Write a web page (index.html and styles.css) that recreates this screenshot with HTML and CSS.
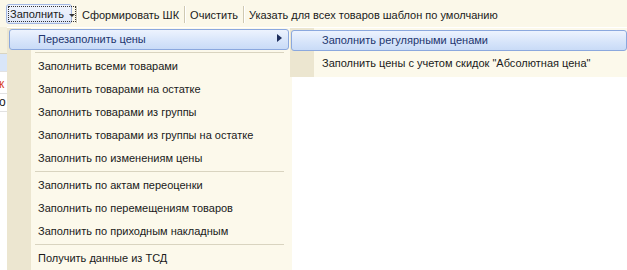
FILE: index.html
```html
<!DOCTYPE html>
<html lang="ru">
<head>
<meta charset="utf-8">
<link rel="stylesheet" href="styles.css">
</head>
<body>
<div class="toolbar">
  <div class="btn-drop"><span class="focus">Заполнить<span class="caret"></span></span></div>
  <div class="tsep"></div>
  <div class="tbtn">Сформировать ШК</div>
  <div class="tsep"></div>
  <div class="tbtn">Очистить</div>
  <div class="tsep"></div>
  <div class="tbtn">Указать для всех товаров шаблон по умолчанию</div>
</div>
<div class="area">
  <div class="grid">
    <div class="g-head"></div>
    <div class="g-row g-sel"></div>
    <div class="g-row g-red"><span>к</span></div>
    <div class="g-row"><span>о</span></div>
  </div>
</div>

<div class="menu main-menu">
  <div class="item active"><span>Перезаполнить цены</span><span class="arrow"></span></div>
  <div class="sep"></div>
  <div class="item">Заполнить всеми товарами</div>
  <div class="item">Заполнить товарами на остатке</div>
  <div class="item">Заполнить товарами из группы</div>
  <div class="item">Заполнить товарами из группы на остатке</div>
  <div class="item">Заполнить по изменениям цены</div>
  <div class="sep"></div>
  <div class="item">Заполнить по актам переоценки</div>
  <div class="item">Заполнить по перемещениям товаров</div>
  <div class="item">Заполнить по приходным накладным</div>
  <div class="sep"></div>
  <div class="item">Получить данные из ТСД</div>
</div>

<div class="menu sub-menu">
  <div class="item active"><span>Заполнить регулярными ценами</span></div>
  <div class="item">Заполнить цены с учетом скидок "Абсолютная цена"</div>
</div>
</body>
</html>
```
FILE: styles.css
```css
html, body {
  margin: 0;
  padding: 0;
}
body {
  width: 627px;
  height: 270px;
  overflow: hidden;
  position: relative;
  background: #ffffff;
  font-family: "Liberation Sans", Arial, sans-serif;
  font-size: 11px;
  color: #1a1a1a;
}
.toolbar {
  height: 27px;
  background: #fbf8e9;
  display: flex;
  align-items: center;
  padding: 2px 0 0 6px;
  box-sizing: border-box;
}
.btn-drop {
  height: 20px;
  width: 66px;
  box-sizing: border-box;
  border: 1px solid #a3b7e2;
  border-radius: 3px;
  background: linear-gradient(#f0f4fd, #dfe8f9);
  padding: 1px;
  display: flex;
  margin-top: -1px;
}
.btn-drop .focus {
  flex: 1;
  border: 1px dotted #333;
  display: flex;
  align-items: center;
  padding: 0 0 0 1px;
}
.caret {
  width: 0;
  height: 0;
  border-left: 3px solid transparent;
  border-right: 3px solid transparent;
  border-top: 3px solid #333;
  margin: 2px 0 0 5px;
}
.tsep {
  width: 1px;
  height: 17px;
  background: #cfc9b2;
  border-right: 1px solid #ffffff;
  margin: 0 3px 0 4px;
}
.tbtn {
  padding: 0 1px;
}
.area {
  height: 243px;
}
.grid {
  width: 7px;
  overflow: hidden;
}
.g-head {
  height: 26px;
  background: #f4f0dd;
  border-bottom: 1px solid #d9d4c0;
}
.g-row {
  height: 17px;
  border-bottom: 1px solid #e2e2e2;
  position: relative;
  white-space: nowrap;
  line-height: 17px;
  font-size: 12px;
}
.g-sel {
  background: #d9e6f9;
}
.g-red {
  height: 21px;
  line-height: 24px;
  color: #d9401a;
}
.g-row span {
  display: block;
  margin-left: -1px;
}
.menu {
  position: absolute;
  top: 28px;
  background: linear-gradient(to right, #ece6d0 0, #ece6d0 24px, #fcf9eb 24px);
}
.main-menu {
  left: 7px;
  width: 285px;
  height: 242px;
}
.sub-menu {
  left: 290px;
  width: 340px;
  padding: 1px 0 2px;
}
.item {
  height: 23px;
  line-height: 23px;
  padding-left: 31px;
  position: relative;
  white-space: nowrap;
}
.sub-menu .item {
  padding-left: 32px;
}
.item.active {
  color: #22356e;
}
.item.active::before {
  content: "";
  position: absolute;
  left: 2px;
  right: 3px;
  top: 1px;
  bottom: 1px;
  border: 1px solid #8ba8de;
  border-radius: 3px;
  background: linear-gradient(#edf3fe, #d6e4fa 60%, #c9dbf7);
}
.sub-menu .item.active::before {
  left: 1px;
  right: 3px;
}
.item span {
  position: relative;
}
.arrow {
  position: absolute !important;
  left: 270px;
  top: 6px;
  width: 0;
  height: 0;
  border-top: 4px solid transparent;
  border-bottom: 4px solid transparent;
  border-left: 5px solid #1d2d5c;
}
.sep {
  height: 4px;
  box-sizing: border-box;
  padding-top: 1px;
}
.sep::after {
  content: "";
  display: block;
  margin-left: 28px;
  margin-right: 8px;
  height: 1px;
  background: #d9d4c0;
}
```
